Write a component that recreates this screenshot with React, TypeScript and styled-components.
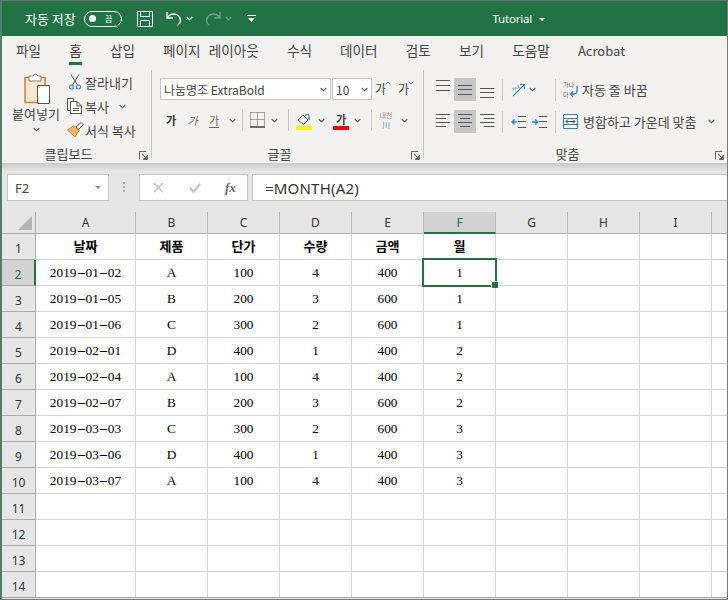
import React from "react";
import styled, { createGlobalStyle } from "styled-components";

const UI = `"Noto Sans CJK KR", "Noto Sans", sans-serif`;
const SERIF = `"Liberation Serif", "Noto Sans CJK KR", serif`;
const GREEN = "#217346";

const Global = createGlobalStyle`
  html, body { margin: 0; padding: 0; background: #e6e6e6; }
  #root { width: 728px; height: 600px; overflow: hidden; }
  * { box-sizing: border-box; }
`;

const Win = styled.div`
  width: 728px; height: 600px; overflow: hidden; position: relative;
  display: flex; flex-direction: column;
  border-top: 1px solid #6f6f6f;
  border-left: 2px solid #4f7f68;
  border-right: 1px solid #7a7a7a;
  border-bottom: 1px solid #7a7a7a;
  background: #e6e6e6;
  font-family: ${UI};
  color: #444;
`;
const TitleBar = styled.div`
  height: 35px; flex: none; background: ${GREEN}; color: #fff;
  display: flex; align-items: center; padding-left: 23px; font-size: 13px;
`;
const AutoSave = styled.span`width: 52px; white-space: nowrap;`;
const Toggle = styled.span`
  width: 38px; height: 16px; margin-left: 7px; border: 1.2px solid #fff; border-radius: 8px;
  display: flex; align-items: center; padding-left: 4px; font-size: 8px; gap: 9px; line-height: 1;
  &::before { content: ""; width: 7px; height: 7px; border-radius: 50%; background: #fff; }
`;
const Svg = styled.svg<{ $ml?: number }>`
  flex: none; display: block; margin-left: ${p => p.$ml ?? 0}px;
`;
const DocTitle = styled.span`
  margin-left: auto; font-size: 11.5px; letter-spacing: -0.2px; display: flex; align-items: center; font-family: "Noto Sans", sans-serif;
`;
const TitleCaret = styled.span`
  margin: 1px 182px 0 7px; width: 0; height: 0;
  border-left: 3px solid transparent; border-right: 3px solid transparent; border-top: 3px solid #fff;
`;

const Tabs = styled.div`
  height: 32px; flex: none; background: #f3f2f1; display: flex; gap: 28.2px; padding-left: 14px;
  font-size: 13.6px; word-spacing: 5px;
`;
const Tab = styled.span<{ $on?: boolean; $latin?: boolean }>`
  position: relative; line-height: 29px; white-space: nowrap; color: ${p => p.$on ? "#2f2f2f" : "#444"};
  ${p => p.$latin ? `font-size: 13px;` : ""}
  ${p => p.$on ? `&::after { content: ""; position: absolute; left: 0; right: 0; top: 26px; height: 2.5px; background: ${GREEN}; }` : ""}
`;

const Ribbon = styled.div`
  height: 95px; flex: none; background: #f3f2f1; display: flex; padding-top: 2px;
`;
const Group = styled.div<{ $w: number; $last?: boolean }>`
  width: ${p => p.$w}px; flex: none; height: 88px; display: flex; flex-direction: column;
  border-right: ${p => p.$last ? "none" : "1.5px solid #c6c6c6"};
`;
const GroupBody = styled.div`flex: 1; min-height: 0; display: flex;`;
const GroupFoot = styled.div`
  height: 18px; flex: none; display: flex; align-items: center; font-size: 13px; margin-bottom: -5px;
`;
const GroupName = styled.span`flex: 1; text-align: center; line-height: 18px;`;
const LauncherBox = styled.span`width: 16px; flex: none; display: flex; justify-content: center; margin-top: 2px;`;

const PasteCol = styled.div`
  width: 48px; margin-left: 10px; display: flex; flex-direction: column; align-items: center; padding-top: 3px;
`;
const PasteLabel = styled.span`font-size: 13px; line-height: 16px; margin: 1px 0 5px; white-space: nowrap;`;
const ClipCol = styled.div`margin-left: 5px; display: flex; flex-direction: column;`;
const ClipRow = styled.div`height: 24px; display: flex; align-items: center; font-size: 13px; white-space: nowrap;`;
const ClipIcon = styled.span`width: 20px; flex: none; display: flex; justify-content: center;`;

const FontCol = styled.div`flex: 1; display: flex; flex-direction: column; padding: 8px 0 0 8px;`;
const FontRow = styled.div`display: flex; align-items: center; height: 22px;`;
const FontRow2 = styled.div`display: flex; align-items: center; height: 24px; margin-top: 8px;`;
const Combo = styled.div<{ $w: number; $ml?: number }>`
  width: ${p => p.$w}px; height: 22px; margin-left: ${p => p.$ml ?? 0}px; background: #fff; border: 1px solid #c6c6c6;
  display: flex; align-items: center; padding: 0 3px; font-size: 12px; white-space: nowrap; justify-content: space-between;
`;
const GrowBtn = styled.span<{ $ml: number }>`
  margin-left: ${p => p.$ml}px; font-size: 12px; width: 16px; position: relative; line-height: 18px; display: inline-block;
  & > svg { position: absolute; right: 0; top: 1px; }
`;
const Glyph = styled.span<{ $bold?: boolean; $italic?: boolean; $under?: boolean; $w: number }>`
  width: ${p => p.$w}px; text-align: center; font-size: 11px; line-height: 14px;
  font-weight: ${p => p.$bold ? 700 : 400}; font-style: ${p => p.$italic ? "italic" : "normal"};
  color: ${p => p.$bold ? "#333" : "#666"};
  & > u { text-underline-offset: 2px; }
`;
const Sep = styled.span<{ $ml: number }>`
  width: 1px; height: 22px; flex: none; background: #c6c6c6; margin-left: ${p => p.$ml}px;
`;
const ColorIcon = styled.span<{ $ml: number; $color?: string }>`
  margin-left: ${p => p.$ml}px; width: 16px; height: 20px; flex: none; display: flex; flex-direction: column;
  align-items: center; justify-content: flex-end; font-size: 11px; font-weight: 700; color: #444; line-height: 14px;
  &::after { content: ""; width: 16px; height: 4px; background: ${p => p.$color}; }
`;
const Phonetic = styled.span<{ $ml: number }>`
  margin-left: ${p => p.$ml}px; width: 16px; flex: none; display: flex; flex-direction: column; align-items: center;
  font-size: 7px; line-height: 9px; color: #8a8a8a;
`;
const PhoneticMark = styled.span`color: #4a9ad4; font-size: 8px; line-height: 9px;`;

const AlignCol = styled.div`flex: 1; display: flex; flex-direction: column; padding: 8px 0 0 8px;`;
const AlignRow = styled.div<{ $mt?: number }>`display: flex; align-items: center; height: 23px; margin-top: ${p => p.$mt ?? 0}px;`;
const AlignBtn = styled.span<{ $on?: boolean }>`
  width: 22px; height: 23px; flex: none; display: flex; align-items: center; justify-content: center;
  background: ${p => p.$on ? "#c6c6c6" : "transparent"};
`;
const ActionText = styled.span<{ $ml: number; $w?: number }>`
  margin-left: ${p => p.$ml}px; font-size: 13px; white-space: nowrap; ${p => p.$w ? `width: ${p.$w}px;` : ""}
`;

const FormulaArea = styled.div`
  height: 49px; flex: none; display: flex; align-items: flex-start; padding: 11px 0 0 5px;
  background: linear-gradient(#c9c9c9 0, #e6e6e6 8px);
`;
const NameBox = styled.div`
  width: 102px; height: 27px; background: #fff; border: 1px solid #c6c6c6; display: flex; align-items: center;
  justify-content: space-between; padding: 0 7px; font-size: 13px; font-family: "Noto Sans", sans-serif;
`;
const Caret = styled.span`
  width: 0; height: 0; border-left: 3.5px solid transparent; border-right: 3.5px solid transparent; border-top: 3.5px solid #8a8a8a;
`;
const Grip = styled.span`
  margin: 8px 14px 0 14px; width: 2px; height: 10px; flex: none;
  background: repeating-linear-gradient(#a8a8a8 0 2px, transparent 2px 4px);
`;
const FxBox = styled.div`
  width: 109px; height: 27px; background: #fff; border: 1px solid #c6c6c6; display: flex; align-items: center; padding-left: 13px;
`;
const FxText = styled.span`
  margin-left: 24px; font-family: "Liberation Serif", serif; font-style: italic; font-weight: 700; font-size: 13px; color: #666;
`;
const FormulaInput = styled.div`
  flex: 1; height: 27px; margin-left: 4px; background: #fff; border: 1px solid #c6c6c6; border-right: none;
  display: flex; align-items: center; padding-left: 12px; font-size: 15px; letter-spacing: 0.2px; font-family: "Noto Sans", sans-serif; color: #333;
`;

const Sheet = styled.div`
  position: relative;
  display: grid; grid-template-columns: 34px 100px repeat(9, 72px); grid-auto-rows: 26px; background: #fff;
  grid-template-rows: 22px;
  &::after { content: ""; position: absolute; left: 0; right: 0; bottom: 0; height: 1px; background: #a0a0a0; }
`;
const Corner = styled.div`
  background: #e6e6e6; border-bottom: 1px solid #ababab; border-right: 1px solid #ababab;
  display: flex; align-items: flex-end; justify-content: flex-end; padding: 0 3px 3px 0;
  &::before { content: ""; width: 14px; height: 14px; background: #b4b4b4; clip-path: polygon(100% 0, 100% 100%, 0 100%); }
`;
const ColHead = styled.div<{ $on?: boolean }>`
  background: ${p => p.$on ? "#d2d2d2" : "#e6e6e6"};
  border-bottom: ${p => p.$on ? `2px solid ${GREEN}` : "1px solid #ababab"};
  border-right: 1px solid #b8b8b8; font-family: "Noto Sans", sans-serif; font-size: 12px;
  color: ${p => p.$on ? GREEN : "#333"};
  display: flex; align-items: center; justify-content: center;
`;
const RowHead = styled.div<{ $on?: boolean }>`
  background: ${p => p.$on ? "#d2d2d2" : "#e6e6e6"};
  border-bottom: 1px solid #ababab;
  border-right: ${p => p.$on ? `2px solid ${GREEN}` : "1px solid #ababab"};
  font-family: "Noto Sans", sans-serif; font-size: 12px; color: ${p => p.$on ? GREEN : "#333"};
  display: flex; align-items: flex-end; justify-content: center; padding-bottom: 2px; line-height: 16px;
`;
const Cell = styled.div<{ $head?: boolean; $sel?: boolean }>`
  position: relative; border-right: 1px solid #d4d4d4; border-bottom: 1px solid #d4d4d4;
  display: flex; align-items: center; justify-content: center; color: #000;
  font-family: ${SERIF}; font-size: 13.33px; font-weight: ${p => p.$head ? 700 : 400};
  ${p => p.$sel ? `
    z-index: 2;
    &::before { content: ""; position: absolute; left: -2px; top: -2px; right: -2px; bottom: -2px; border: 2px solid ${GREEN}; }
    &::after { content: ""; position: absolute; right: -3px; bottom: -3px; width: 6px; height: 6px; background: ${GREEN}; border: 1px solid #fff; border-right: none; border-bottom: none; }
  ` : ""}
`;
const HeadText = styled.span`font-family: "Noto Sans CJK KR", sans-serif; font-size: 13px; font-weight: 700; margin-bottom: 2px;`;
const Dash = styled.span`display: inline-block; width: 9px; text-align: center; transform: scaleX(2.1);`;

const Chevron = ({ ml = 0, color = "#555" }: { ml?: number; color?: string }) => (
  <Svg $ml={ml} width="7" height="5" viewBox="0 0 7 5"><path d="M.7 1l2.800 2.800L6.300 1" fill="none" stroke={color} strokeWidth="1.1" /></Svg>
);
const Launcher = () => (
  <Svg width="9" height="9" viewBox="0 0 9 9">
    <path d="M8.500 4V8.500H4M1 .5H.5V8.500M.5 .5H7M3 3l4.500 4.500M7.500 4.500v3h-3" fill="none" stroke="#666" strokeWidth="1" />
  </Svg>
);
const Lines = ({ widths, y, anchor }: { widths: number[]; y: number[]; anchor: "l" | "c" | "r" }) => (
  <Svg width="14" height="23" viewBox="0 0 14 23">
    {widths.map((w, i) => {
      const x = anchor === "l" ? 0 : anchor === "c" ? (14 - w) / 2 : 14 - w;
      return <path key={i} d={`M${x} ${y[i]}.5h${w}`} stroke="#555" strokeWidth="1" />;
    })}
  </Svg>
);
const Indent = ({ ml, right }: { ml: number; right?: boolean }) => (
  <Svg $ml={ml} width="15" height="14" viewBox="0 0 15 14">
    <path d="M7 1.500h8M7 6.500h8M7 12.500h8" stroke="#555" strokeWidth="1" />
    <path d={right ? "M0 7h5M3 4.500 5.500 7 3 9.500" : "M6 7H1M3.500 4.500 1 7l2.500 2.500"} fill="none" stroke="#2a85cc" strokeWidth="1.3" />
  </Svg>
);

const cols = ["A", "B", "C", "D", "E", "F", "G", "H", "I", ""];
const rows = [
  ["2019-01-02", "A", "100", "4", "400", "1"],
  ["2019-01-05", "B", "200", "3", "600", "1"],
  ["2019-01-06", "C", "300", "2", "600", "1"],
  ["2019-02-01", "D", "400", "1", "400", "2"],
  ["2019-02-04", "A", "100", "4", "400", "2"],
  ["2019-02-07", "B", "200", "3", "600", "2"],
  ["2019-03-03", "C", "300", "2", "600", "3"],
  ["2019-03-06", "D", "400", "1", "400", "3"],
  ["2019-03-07", "A", "100", "4", "400", "3"],
];
const heads = ["날짜", "제품", "단가", "수량", "금액", "월"];

const DateText = ({ v }: { v: string }) => {
  const [y, m, d] = v.split("-");
  return <span>{y}<Dash>-</Dash>{m}<Dash>-</Dash>{d}</span>;
};

const Blank = ({ n }: { n: number }) => <>{Array.from({ length: n }, (_, i) => <Cell key={i} />)}</>;

export default function App() {
  return (
    <Win>
      <Global />
      <TitleBar>
        <AutoSave>자동 저장</AutoSave>
        <Toggle>끔</Toggle>
        <Svg $ml={15} width="16" height="16" viewBox="0 0 16 16" fill="none" stroke="#fff" strokeWidth="1">
          <path d="M.5.500h15v15H.5zM3.500.500v5h9v-5M3.500 15.500v-6h9v6" />
        </Svg>
        <Svg $ml={13} width="16" height="16" viewBox="0 0 16 16" fill="none" stroke="#fff" strokeWidth="1.3">
          <path d="M1 1v6h6M1.500 6.500C3 4 5 3 7.500 3 11.500 3 14.500 6 14.500 9.500c0 2-1 3.500-3 5" />
        </Svg>
        <Chevron ml={4} color="#fff" />
        <Svg $ml={12} width="16" height="16" viewBox="0 0 16 16" fill="none" stroke="#6fa58a" strokeWidth="1.3">
          <path d="M15 1v6H9M14.500 6.500C13 4 11 3 8.500 3 4.500 3 1.500 6 1.500 9.500c0 2 1 3.500 3 5" />
        </Svg>
        <Chevron ml={4} color="#6fa58a" />
        <Svg $ml={15} width="9" height="9" viewBox="0 0 9 9" fill="#fff">
          <path d="M0 1h9v1H0zM1 4h7L4.500 8z" />
        </Svg>
        <DocTitle>Tutorial<TitleCaret /></DocTitle>
      </TitleBar>

      <Tabs>
        {["파일", "홈", "삽입", "페이지 레이아웃", "수식", "데이터", "검토", "보기", "도움말", "Acrobat"].map(t => (
          <Tab key={t} $on={t === "홈"} $latin={t === "Acrobat"}>{t}</Tab>
        ))}
      </Tabs>

      <Ribbon>
        <Group $w={150}>
          <GroupBody>
            <PasteCol>
              <Svg $ml={3} width="27" height="32" viewBox="0 0 27 32">
                <path d="M1 4.500h20v25H1z" fill="#f7e6cf" stroke="#d67f27" strokeWidth="1.500" />
                <path d="M5 3h4.500a2 2 0 0 1 4 0H17v5H5z" fill="#fff" stroke="#7a7a7a" />
                <path d="M13.500 12.500h12v18h-12z" fill="#fff" stroke="#555" />
              </Svg>
              <PasteLabel>붙여넣기</PasteLabel>
              <Chevron ml={0} />
            </PasteCol>
            <ClipCol>
              <ClipRow>
                <ClipIcon>
                  <Svg width="12" height="16" viewBox="0 0 12 16" fill="none">
                    <path d="M2 .500 8.500 11M10 .500 3.500 11" stroke="#555" />
                    <circle cx="2.500" cy="13" r="2" stroke="#2a85cc" strokeWidth="1.200" />
                    <circle cx="9.500" cy="13" r="2" stroke="#2a85cc" strokeWidth="1.200" />
                  </Svg>
                </ClipIcon>잘라내기
              </ClipRow>
              <ClipRow>
                <ClipIcon>
                  <Svg width="16" height="16" viewBox="0 0 16 16" fill="none" stroke="#555">
                    <path d="M3.500 12.500h-3V.500h6V3" />
                    <path d="M3.500 3.500H10L14.500 8v7.500h-11zM10 3.500V8h4.500M6 10.500h6M6 12.500h6" fill="#fff" />
                  </Svg>
                </ClipIcon>복사<Chevron ml={10} />
              </ClipRow>
              <ClipRow>
                <ClipIcon>
                  <Svg width="17" height="16" viewBox="0 0 17 16">
                    <path d="M.5 8 7 3.500l5 5L8 15z" fill="#f4b36b" stroke="#d67f27" />
                    <path d="M9 5 14 .500 16.500 3 11 7.500z" fill="#fff" stroke="#555" />
                  </Svg>
                </ClipIcon>서식 복사
              </ClipRow>
            </ClipCol>
          </GroupBody>
          <GroupFoot><GroupName>클립보드</GroupName><LauncherBox><Launcher /></LauncherBox></GroupFoot>
        </Group>

        <Group $w={272}>
          <FontCol>
            <FontRow>
              <Combo $w={171}>나눔명조 ExtraBold<Chevron /></Combo>
              <Combo $w={40} $ml={1}>10<Chevron /></Combo>
              <GrowBtn $ml={3}>가<Svg width="6" height="4" viewBox="0 0 6 4"><path d="M.5 3.500 3 1l2.500 2.500" fill="none" stroke="#2a85cc" /></Svg></GrowBtn>
              <GrowBtn $ml={7}>가<Svg width="6" height="4" viewBox="0 0 6 4"><path d="M.5.500 3 3 5.500.500" fill="none" stroke="#2a85cc" /></Svg></GrowBtn>
            </FontRow>
            <FontRow2>
              <Glyph $w={22} $bold>가</Glyph>
              <Glyph $w={21} $italic>가</Glyph>
              <Glyph $w={22}><u>가</u></Glyph>
              <Chevron ml={4} />
              <Sep $ml={6} />
              <Svg $ml={7} width="15" height="16" viewBox="0 0 15 16" fill="none">
                <path d="M.5.500h14M.5 7.500h14M.5.500v13M7.500.500v13M14.500.500v13" stroke="#555" strokeDasharray="1 1" />
                <path d="M0 15h15" stroke="#222" strokeWidth="1.300" />
              </Svg>
              <Chevron ml={6} />
              <Sep $ml={10} />
              <ColorIcon $ml={7} $color="#ffff00">
                <Svg width="14" height="13" viewBox="0 0 14 13" fill="none">
                  <path d="M1 7 6 2l5 5-4.500 4.500z" stroke="#555" />
                  <path d="M8 3c2-3 4-2 4 1v3" stroke="#2a85cc" strokeWidth="1.300" />
                </Svg>
              </ColorIcon>
              <Chevron ml={6} />
              <ColorIcon $ml={8} $color="#ff0000">가</ColorIcon>
              <Chevron ml={5} />
              <Sep $ml={10} />
              <Phonetic $ml={6}>내천<PhoneticMark>川</PhoneticMark></Phonetic>
              <Chevron ml={7} />
            </FontRow2>
          </FontCol>
          <GroupFoot><GroupName>글꼴</GroupName><LauncherBox><Launcher /></LauncherBox></GroupFoot>
        </Group>

        <Group $w={303} $last>
          <AlignCol>
            <AlignRow>
              <AlignBtn><Lines anchor="l" widths={[14, 14, 14]} y={[2, 7, 12]} /></AlignBtn>
              <AlignBtn $on><Lines anchor="l" widths={[14, 14, 14]} y={[7, 11, 16]} /></AlignBtn>
              <AlignBtn><Lines anchor="l" widths={[14, 14, 14]} y={[10, 14, 19]} /></AlignBtn>
              <Sep $ml={4} />
              <Svg $ml={7} width="16" height="16" viewBox="0 0 16 16">
                <text x="2" y="8" fontSize="4.500" fill="#555" fontFamily="Noto Sans CJK KR" transform="rotate(-35 6 7)">가나</text>
                <path d="M3 14 14 3M10 2.500h4.500V7" fill="none" stroke="#2a85cc" strokeWidth="1.100" />
              </Svg>
              <Chevron ml={3} />
              <Sep $ml={19} />
              <Svg $ml={7} width="16" height="18" viewBox="0 0 16 18">
                <text x="0" y="6" fontSize="6" fill="#555" fontFamily="Noto Sans CJK KR">가나</text>
                <text x="0" y="16" fontSize="6" fill="#555" fontFamily="Noto Sans CJK KR">다</text>
                <path d="M14 5v5a3 3 0 0 1-3 3H8M10 10.500 7.500 13l2.500 2.500" fill="none" stroke="#2a85cc" strokeWidth="1.300" />
              </Svg>
              <ActionText $ml={3}>자동 줄 바꿈</ActionText>
            </AlignRow>
            <AlignRow $mt={9}>
              <AlignBtn><Lines anchor="l" widths={[14, 10, 14, 10]} y={[4, 8, 12, 16]} /></AlignBtn>
              <AlignBtn $on><Lines anchor="c" widths={[14, 10, 14, 10]} y={[4, 8, 12, 16]} /></AlignBtn>
              <AlignBtn><Lines anchor="r" widths={[14, 10, 14, 10]} y={[4, 8, 12, 16]} /></AlignBtn>
              <Sep $ml={4} />
              <Indent ml={8} />
              <Indent ml={6} right />
              <Sep $ml={8} />
              <Svg $ml={7} width="15" height="15" viewBox="0 0 15 15" fill="none">
                <path d="M.5.500h14v14H.5z" stroke="#2a85cc" fill="#fff" />
                <path d="M.5 4.500h14M.5 10.500h14" stroke="#2a85cc" />
                <path d="M3 7.500h9M5 5.500l-2 2 2 2M10 5.500l2 2-2 2" stroke="#444" />
              </Svg>
              <ActionText $ml={5} $w={114}>병합하고 가운데 맞춤</ActionText>
              <Chevron ml={11} />
            </AlignRow>
          </AlignCol>
          <GroupFoot><GroupName>맞춤</GroupName><LauncherBox><Launcher /></LauncherBox></GroupFoot>
        </Group>
      </Ribbon>

      <FormulaArea>
        <NameBox>F2<Caret /></NameBox>
        <Grip />
        <FxBox>
          <Svg width="11" height="11" viewBox="0 0 11 11"><path d="M1 1l9 9M10 1l-9 9" stroke="#c4c4c4" strokeWidth="1.500" /></Svg>
          <Svg $ml={25} width="12" height="10" viewBox="0 0 12 10"><path d="M1 5l3.500 4L11 1" fill="none" stroke="#c4c4c4" strokeWidth="2" /></Svg>
          <FxText>fx</FxText>
        </FxBox>
        <FormulaInput>=MONTH(A2)</FormulaInput>
      </FormulaArea>

      <Sheet>
        <Corner />
        {cols.map((c, i) => <ColHead key={i} $on={c === "F"}>{c}</ColHead>)}

        <RowHead>1</RowHead>
        {heads.map(h => <Cell key={h} $head><HeadText>{h}</HeadText></Cell>)}
        <Blank n={4} />

        {rows.map((r, i) => (
          <React.Fragment key={i}>
            <RowHead $on={i === 0}>{i + 2}</RowHead>
            <Cell><DateText v={r[0]} /></Cell>
            {r.slice(1).map((v, j) => <Cell key={j} $sel={i === 0 && j === 4}>{v}</Cell>)}
            <Blank n={4} />
          </React.Fragment>
        ))}

        {[11, 12, 13, 14].map(n => (
          <React.Fragment key={n}>
            <RowHead>{n}</RowHead>
            <Blank n={10} />
          </React.Fragment>
        ))}
      </Sheet>
    </Win>
  );
}
